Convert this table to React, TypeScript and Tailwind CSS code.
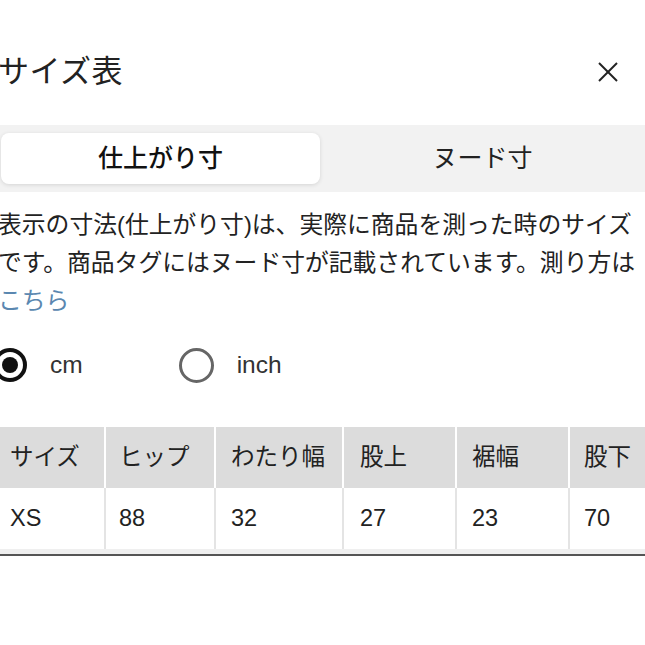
import React from "react";

const font = { fontFamily: '"Liberation Sans", "Noto Sans CJK JP", sans-serif' };

const pads = ["pl-[12px]", "pl-[13px]", "pl-[15px]", "pl-[16px]", "pl-[15px]", "pl-[14px]"];

export default function App() {
  const headers = ["サイズ", "ヒップ", "わたり幅", "股上", "裾幅", "股下"];
  const row = ["XS", "88", "32", "27", "23", "70"];
  return (
    <div className="w-[645px] h-[645px] overflow-hidden bg-white">
      <div className="w-[660px] -ml-[5px] text-[#222]" style={font}>
        {/* Title row */}
        <div className="flex items-center justify-between pt-[52px] pl-[3px] pr-[36px]">
          <h1 className="text-[31px] leading-[40px] font-normal tracking-[0.5px]">サイズ表</h1>
          <svg width="22" height="22" viewBox="0 0 22 22" className="text-[#222]">
            <line x1="2" y1="2" x2="20" y2="20" stroke="currentColor" strokeWidth="2" />
            <line x1="20" y1="2" x2="2" y2="20" stroke="currentColor" strokeWidth="2" />
          </svg>
        </div>

        {/* Tabs */}
        <div className="mt-[33px] bg-[#f2f2f2] px-[6px] py-[8px] grid grid-cols-[319px_1fr]">
          <div className="h-[51px] bg-white rounded-[8px] shadow-[0_1px_4px_rgba(0,0,0,0.12)] flex items-center justify-center text-[25px] font-medium text-[#111]">
            仕上がり寸
          </div>
          <div className="h-[51px] flex items-center justify-center text-[25px] text-[#222] pr-[4px]">
            ヌード寸
          </div>
        </div>

        {/* Description */}
        <p className="mt-[14px] pl-[3px] text-[23.8px] leading-[38px] whitespace-nowrap text-[#222]">
          表示の寸法(仕上がり寸)は、実際に商品を測った時のサイズ
          <br />
          です。商品タグにはヌード寸が記載されています。測り方は
          <br />
          <span className="text-[#5a87b0]">こちら</span>
        </p>

        {/* Radios */}
        <div className="mt-[25px] flex items-center h-[40px] pl-[3px]">
          <div className="-ml-[5px] flex items-center">
            <div className="w-[34px] h-[34px] rounded-full border-[4px] border-[#111] flex items-center justify-center">
              <div className="w-[16px] h-[16px] rounded-full bg-[#111]" />
            </div>
            <span className="ml-[23px] text-[24.5px] text-[#333]">cm</span>
          </div>
          <div className="ml-[96px] flex items-center">
            <div className="w-[35px] h-[35px] rounded-full border-[3px] border-[#666]" />
            <span className="ml-[23px] text-[24.5px] text-[#333]">inch</span>
          </div>
        </div>

        {/* Table */}
        <div className="mt-[42px] pl-[3px]">
          <div className="grid grid-cols-[108px_110px_128px_113px_113px_120px]">
            {headers.map((h, i) => (
              <div
                key={h}
                className={`h-[61px] bg-[#dcdcdc] border-r-[2px] border-white flex items-center ${pads[i]} text-[23.5px] text-[#222]`}
              >
                {h}
              </div>
            ))}
            {row.map((v, i) => (
              <div
                key={i}
                className={`h-[61px] bg-white border-r-[2px] border-[#e4e4e4] flex items-center ${pads[i]} text-[23.5px] text-[#222]`}
              >
                {v}
              </div>
            ))}
          </div>
          <div className="h-[5px] bg-[#efefef]" />
          <div className="h-[2px] bg-[#555]" />
        </div>
      </div>
    </div>
  );
}
